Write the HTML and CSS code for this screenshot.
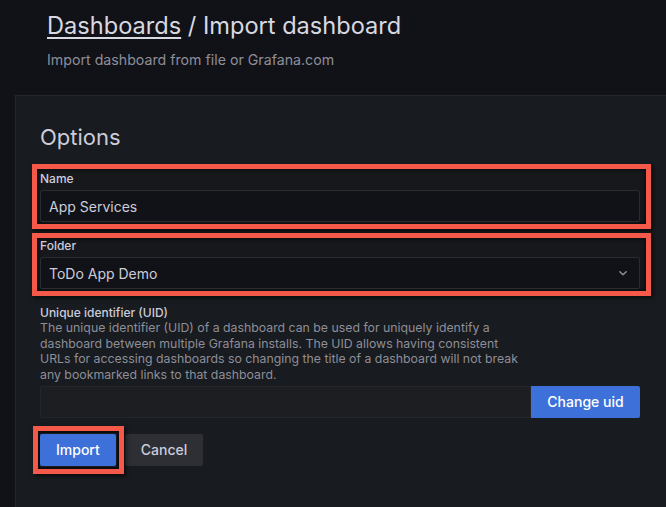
FILE: index.html
```html
<!DOCTYPE html>
<html lang="en">
<head>
<meta charset="utf-8">
<title>Import dashboard</title>
<link rel="stylesheet" href="styles.css">
</head>
<body>
<header class="page-header">
  <h1 class="page-title"><a class="crumb" href="#">Dashboards</a> / Import dashboard</h1>
  <p class="page-sub">Import dashboard from file or Grafana.com</p>
</header>
<section class="panel">
  <div class="panel-body">
    <h2 class="options-title">Options</h2>
    <div class="highlight">
      <label class="field-label">Name</label>
      <div class="input"><span class="input-text">App Services</span></div>
    </div>
    <div class="highlight highlight-folder">
      <label class="field-label">Folder</label>
      <div class="input select">
        <span class="input-text">ToDo App Demo</span>
        <svg class="chevron" width="16" height="16" viewBox="0 0 16 16"><path d="M4.8 6.8 L8 9.8 L11.2 6.8" fill="none" stroke="#8e8e98" stroke-width="1.5" stroke-linecap="round" stroke-linejoin="round"/></svg>
      </div>
    </div>
    <div class="field uid-field">
      <label class="field-label uid-label">Unique identifier (UID)</label>
      <p class="field-desc">The unique identifier (UID) of a dashboard can be used for uniquely identify a<br>dashboard between multiple Grafana installs. The UID allows having consistent<br>URLs for accessing dashboards so changing the title of a dashboard will not break<br>any bookmarked links to that dashboard.</p>
      <div class="uid-row">
        <div class="input input-disabled"></div>
        <button class="btn btn-primary btn-attached">Change uid</button>
      </div>
    </div>
    <div class="actions">
      <span class="mark"><button class="btn btn-primary">Import</button></span>
      <button class="btn btn-secondary">Cancel</button>
    </div>
  </div>
</section>
</body>
</html>
```

FILE: styles.css
```css
* { box-sizing: border-box; }

html, body {
  margin: 0;
  padding: 0;
}

body {
  width: 666px;
  height: 507px;
  overflow: hidden;
  background: #111217;
  color: #ccccdc;
  font-family: Inter, "Noto Sans", sans-serif;
}

.page-header {
  padding: 11px 0 0 47px;
  height: 95px;
}

.page-title {
  margin: 0;
  font-size: 23.6px;
  line-height: 30px;
  font-weight: 400;
  color: #d8d9e0;
}

.crumb {
  color: inherit;
  text-decoration: underline;
  text-underline-offset: 3px;
  text-decoration-thickness: 2px;
}

.page-sub {
  margin: 11px 0 0;
  font-size: 14.2px;
  line-height: 16px;
  color: #8e8e99;
}

.panel {
  margin-left: 15px;
  height: 420px;
  background: #181b1f;
  border: 1px solid #24262b;
  border-right: none;
  border-bottom: none;
}

.panel-body {
  width: 624px;
  padding: 29px 0 0 24px;
}

.options-title {
  margin: 0 0 14px;
  font-size: 22px;
  line-height: 25px;
  font-weight: 400;
  color: #ccccdc;
}

.highlight {
  margin: 0 -11px 0 -8px;
  padding: 2px 6px 2px 3px;
  border: 5px solid #f4594a;
  box-shadow: inset 0 0 5px rgba(0, 0, 0, 0.9), 2px 2px 4px rgba(0, 0, 0, 0.6);
  background: #16181c;
}

.highlight-folder {
  margin-top: 4px;
  padding-top: 0;
}

.field-label {
  display: block;
  font-size: 12px;
  line-height: 16px;
  font-weight: 500;
  margin-bottom: 3px;
  color: #ccccdc;
}

.input {
  height: 32px;
  display: flex;
  align-items: center;
  padding: 0 8px;
  background: #111217;
  border: 1px solid #2a2c31;
  border-radius: 2px;
  font-size: 14px;
  color: #ccccdc;
}

.input-text { flex: 1; }

.chevron { flex: none; }

.uid-field { margin-top: 9px; }

.uid-label {
  line-height: 15px;
  margin-bottom: 0;
}

.field-desc {
  margin: 0 0 3px;
  white-space: nowrap;
  font-size: 12.3px;
  line-height: 15.7px;
  color: #8e8e99;
}

.uid-row {
  display: flex;
}

.input-disabled {
  flex: 1;
  background: #1c1e22;
  border-color: #24262b;
  border-radius: 2px 0 0 2px;
}

.btn {
  height: 32px;
  padding: 0 16px;
  border: none;
  border-radius: 2px;
  font-family: inherit;
  font-size: 14px;
  font-weight: 500;
  cursor: pointer;
}

.btn-primary {
  background: #3d71d9;
  color: #ffffff;
}

.btn-attached {
  width: 109px;
  padding: 0;
  border-radius: 0 2px 2px 0;
}

.btn-secondary {
  background: #2d2f34;
  color: #ccccdc;
}

.actions {
  display: flex;
  gap: 9px;
  margin-top: 16px;
}

.mark {
  position: relative;
  display: inline-flex;
}

.mark::after {
  content: "";
  position: absolute;
  top: -8px;
  bottom: -8px;
  left: -7px;
  right: -8px;
  border: 5px solid #f4594a;
  box-shadow: inset 0 0 0 2px #0b0c0e, 2px 2px 4px rgba(0, 0, 0, 0.6);
  pointer-events: none;
}
```
